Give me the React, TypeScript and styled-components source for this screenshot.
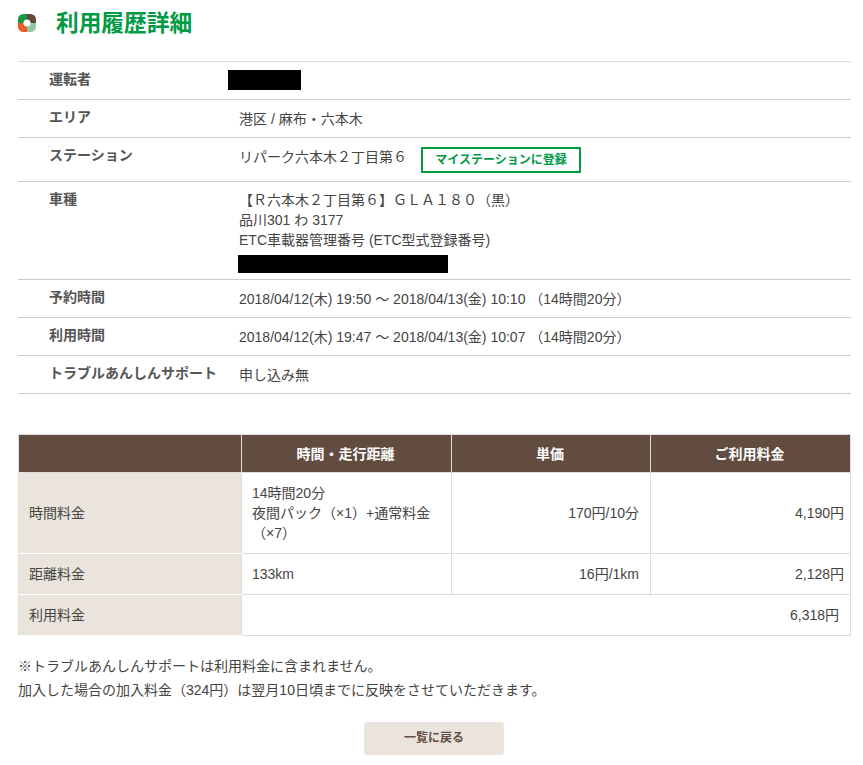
import styled, { createGlobalStyle } from "styled-components";

const GlobalStyle = createGlobalStyle`
  html, body {
    margin: 0;
    padding: 0;
    background: #fff;
  }
  body {
    font-family: "Liberation Sans", "Noto Sans CJK JP", sans-serif;
    font-size: 14px;
    color: #444;
  }
`;

const App = () => {
  return (
    <>
      <GlobalStyle />
      <Page>
        <Heading>
          <Logo />
          <Title>利用履歴詳細</Title>
        </Heading>

        <InfoList>
          <InfoRow $height={38}>
            <InfoLabel>運転者</InfoLabel>
            <InfoValue>
              <Redacted $width={73} $height={20} $top={-1} $left={-11} />
            </InfoValue>
          </InfoRow>
          <InfoRow $height={38}>
            <InfoLabel>エリア</InfoLabel>
            <InfoValue>港区 / 麻布・六本木</InfoValue>
          </InfoRow>
          <InfoRow $height={44}>
            <InfoLabel>ステーション</InfoLabel>
            <StationValue>
              リパーク六本木２丁目第６
              <StationButton>マイステーションに登録</StationButton>
            </StationValue>
          </InfoRow>
          <InfoRow $height={98}>
            <InfoLabel>車種</InfoLabel>
            <CarValue>
              <div>【Ｒ六本木２丁目第６】ＧＬＡ１８０（黒）</div>
              <div>品川301 わ 3177</div>
              <div>ETC車載器管理番号 (ETC型式登録番号)</div>
              <Redacted $width={210} $height={18} $top={5} $left={-1} />
            </CarValue>
          </InfoRow>
          <InfoRow $height={38}>
            <InfoLabel>予約時間</InfoLabel>
            <InfoValue>2018/04/12(木) 19:50 ～ 2018/04/13(金) 10:10 （14時間20分）</InfoValue>
          </InfoRow>
          <InfoRow $height={38}>
            <InfoLabel>利用時間</InfoLabel>
            <InfoValue>2018/04/12(木) 19:47 ～ 2018/04/13(金) 10:07 （14時間20分）</InfoValue>
          </InfoRow>
          <InfoRow $height={38}>
            <InfoLabel>トラブルあんしんサポート</InfoLabel>
            <InfoValue>申し込み無</InfoValue>
          </InfoRow>
        </InfoList>

        <FeeTable>
          <colgroup>
            <col width={223} />
            <col width={210} />
            <col width={199} />
            <col width={200} />
          </colgroup>
          <thead>
            <tr>
              <HeadCell />
              <HeadCell>時間・走行距離</HeadCell>
              <HeadCell>単価</HeadCell>
              <HeadCell>ご利用料金</HeadCell>
            </tr>
          </thead>
          <tbody>
            <tr>
              <RowHead $height={81}>時間料金</RowHead>
              <Cell>
                14時間20分
                <br />
                夜間パック（×1）+通常料金（×7）
              </Cell>
              <Cell $right={11}>170円/10分</Cell>
              <Cell $right={6}>4,190円</Cell>
            </tr>
            <tr>
              <RowHead $height={41}>距離料金</RowHead>
              <Cell>133km</Cell>
              <Cell $right={11}>16円/1km</Cell>
              <Cell $right={6}>2,128円</Cell>
            </tr>
            <tr>
              <RowHead $height={41}>利用料金</RowHead>
              <TotalCell colSpan={3}>6,318円</TotalCell>
            </tr>
          </tbody>
        </FeeTable>

        <Notes>
          <p>※トラブルあんしんサポートは利用料金に含まれません。</p>
          <p>加入した場合の加入料金（324円）は翌月10日頃までに反映をさせていただきます。</p>
        </Notes>

        <Actions>
          <BackButton>一覧に戻る</BackButton>
        </Actions>
      </Page>
    </>
  );
};

const Logo = () => (
  <svg width="18" height="18" viewBox="0 0 20 20" aria-hidden="true">
    <path d="M10 0H6a6 6 0 0 0-6 6v4h6A4 4 0 0 1 10 6z" fill="#119b3f" />
    <path d="M10 0h4a6 6 0 0 1 6 6v4h-6A4 4 0 0 0 10 6z" fill="#5f4a3f" />
    <path d="M0 10v4a6 6 0 0 0 6 6h4v-6A4 4 0 0 1 6 10z" fill="#f15a22" />
    <path d="M20 10v4a6 6 0 0 1-6 6h-4v-6A4 4 0 0 0 14 10z" fill="#8fc9a3" />
  </svg>
);

export default App;

const Page = styled.div`
  width: 833px;
  margin: 0 0 0 18px;
`;

const Heading = styled.header`
  display: flex;
  align-items: center;
  height: 46px;
  margin-bottom: 15px;
`;

const Title = styled.h1`
  margin: 0 0 0 20px;
  color: #009944;
  font-size: 22.7px;
  font-weight: 700;
  line-height: 1;
`;

const InfoList = styled.div`
  border-top: 1px solid #ddd;
`;

const InfoRow = styled.div<{ $height: number }>`
  display: grid;
  grid-template-columns: 210px 1fr;
  box-sizing: border-box;
  height: ${({ $height }) => $height}px;
  border-bottom: 1px solid #ccc;
`;

const InfoLabel = styled.div`
  padding: 7px 0 0 31px;
  font-size: 14px;
  font-weight: 700;
  line-height: 20px;
  color: #555;
  white-space: nowrap;
`;

const InfoValue = styled.div`
  padding: 9px 0 0 11px;
  font-size: 14px;
  line-height: 20px;
`;

const StationValue = styled(InfoValue)`
  display: flex;
  align-items: flex-start;
`;

const StationButton = styled.span`
  box-sizing: border-box;
  width: 160px;
  height: 26px;
  margin-left: 14px;
  border: 2px solid #00a040;
  color: #009944;
  font-size: 12px;
  font-weight: 700;
  line-height: 22px;
  text-align: center;
`;

const CarValue = styled(InfoValue)`
  padding-top: 8px;
`;

const Redacted = styled.div<{ $width: number; $height: number; $top: number; $left: number }>`
  width: ${({ $width }) => $width}px;
  height: ${({ $height }) => $height}px;
  margin: ${({ $top }) => $top}px 0 0 ${({ $left }) => $left}px;
  background: #000;
`;

const FeeTable = styled.table`
  width: 833px;
  margin-top: 40px;
  border-collapse: collapse;
  table-layout: fixed;
  font-size: 14px;
`;

const HeadCell = styled.th`
  height: 35px;
  padding: 0 2px 2px 0;
  background: #614c3f;
  border: 1px solid #ddd;
  color: #fff;
  font-size: 14px;
  font-weight: 700;
  text-align: center;
`;

const RowHead = styled.th<{ $height: number }>`
  box-sizing: border-box;
  height: ${({ $height }) => $height}px;
  padding: 0 10px 2px 10px;
  background: #eae4dc;
  border: 1px solid #ddd;
  border-bottom-color: #fff;
  font-weight: 400;
  color: #444;
  text-align: left;
`;

const Cell = styled.td<{ $right?: number }>`
  padding: 10px ${({ $right }) => $right ?? 6}px 10px 10px;
  border: 1px solid #ddd;
  line-height: 20px;
  text-align: ${({ $right }) => ($right ? "right" : "left")};
`;

const TotalCell = styled.td`
  padding: 0 11px 2px 10px;
  border: 1px solid #ddd;
  text-align: right;
`;

const Notes = styled.div`
  margin-top: 18px;
  font-size: 14px;
  line-height: 24px;

  p {
    margin: 0;
  }
`;

const Actions = styled.div`
  display: flex;
  justify-content: center;
  margin-top: 20px;
  padding-right: 1px;
`;

const BackButton = styled.div`
  width: 140px;
  height: 33px;
  background: #eae4dc;
  border-radius: 3px;
  color: #614c3f;
  font-size: 12px;
  font-weight: 700;
  line-height: 33px;
  text-align: center;
`;
